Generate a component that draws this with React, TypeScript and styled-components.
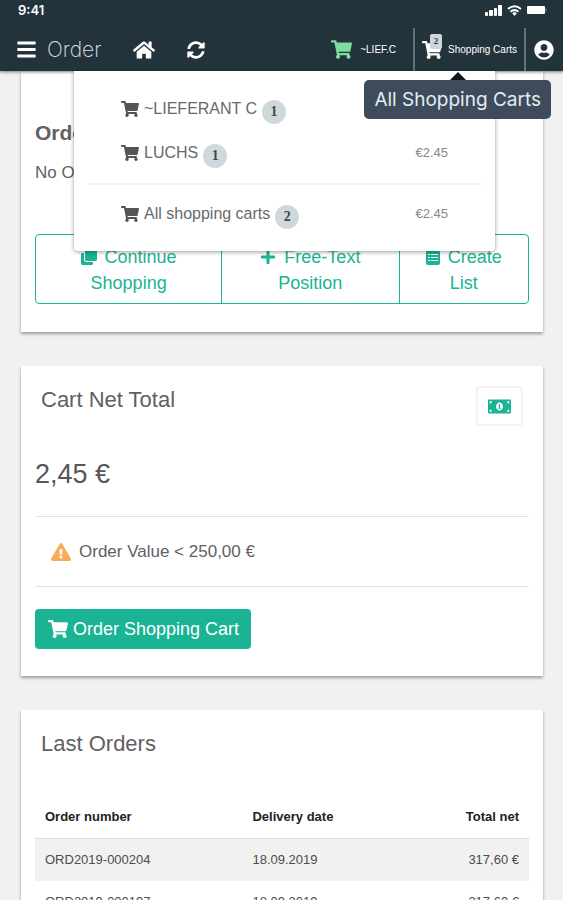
import React from 'react';
import styled, { createGlobalStyle } from 'styled-components';
import {
  FaBars, FaClone, FaExclamationTriangle, FaHome, FaMoneyBillAlt, FaPlus,
  FaShoppingCart, FaSyncAlt, FaUserCircle,
} from 'react-icons/fa';

const green = '#1ab394';
const dark = '#23333b';

const GlobalStyle = createGlobalStyle`
  *, *::before, *::after { box-sizing: border-box; }
  html { scrollbar-width: none; }
  body {
    margin: 0;
    background: #f1f1f1;
    color: #5f6163;
    font: 17px/26px "Liberation Sans", Arial, sans-serif;
  }
  button { font: inherit; color: inherit; background: none; border: 0; padding: 0; cursor: pointer; }
  h1, h2, h3, p, ul { margin: 0; padding: 0; font-weight: 400; }
  svg { flex: none; }
`;

const Header = styled.header`
  position: sticky;
  top: 0;
  z-index: 10;
  background: ${dark};
  color: #fff;
  box-shadow: 0 1px 3px rgba(0, 0, 0, 0.5);
`;

const StatusBar = styled.div`
  display: flex;
  align-items: center;
  justify-content: space-between;
  height: 28px;
  padding: 0 16px 8px 18px;
  font: 600 13px/20px Inter, sans-serif;
`;

const StatusIcons = styled.div`
  display: flex;
  align-items: center;
  gap: 4px;
`;

const Nav = styled.nav`
  display: flex;
  align-items: stretch;
  height: 43px;
  padding-left: 16px;
`;

const NavButton = styled.button<{ $gap?: number }>`
  display: flex;
  align-items: center;
  margin-right: ${({ $gap = 0 }) => $gap}px;
`;

const Title = styled.h1`
  margin-right: 32px;
  color: #dde2e4;
  font: 200 21px/43px Inter, sans-serif;
`;

const NavEnd = styled.div`
  display: flex;
  margin-left: auto;
  font-size: 10px;
  line-height: 12px;
`;

const CartTab = styled.button`
  display: flex;
  align-items: center;
  gap: 8px;
  padding-right: 17px;
`;

const AllCartsTab = styled(CartTab)`
  position: relative;
  gap: 6px;
  padding: 0 7px;
  border: solid #64727a;
  border-width: 0 2px;
`;

const CartIcon = styled.span`
  position: relative;
  display: flex;
`;

const CartCount = styled.span`
  position: absolute;
  top: -6px;
  right: 0;
  width: 12px;
  height: 15px;
  border-radius: 2px;
  background: #ccd6db;
  color: ${dark};
  font: 700 9px/15px "Liberation Serif", serif;
  text-align: center;
`;

const AccountButton = styled.button`
  display: flex;
  align-items: center;
  padding: 0 9px 0 8px;
`;

const Tooltip = styled.div`
  position: absolute;
  top: 80px;
  right: 12px;
  padding: 0 10px;
  border-radius: 5px;
  background: #3e4b5a;
  color: #e3edf5;
  font: 19px/39px Inter, sans-serif;

  &::before {
    content: '';
    position: absolute;
    top: -8px;
    left: 50%;
    margin-left: -8px;
    border: solid transparent;
    border-width: 0 8px 8px;
    border-bottom-color: #10171b;
  }
`;

const CartMenu = styled.ul`
  position: absolute;
  top: 71px;
  right: 68px;
  left: 74px;
  padding: 16px 14px 15px;
  border-radius: 0 0 4px 4px;
  background: #fff;
  box-shadow: 0 1px 4px rgba(0, 0, 0, 0.4);
  color: #67696b;
  font-size: 16px;
  list-style: none;
`;

const MenuItem = styled.li<{ $divided?: boolean }>`
  margin-top: ${({ $divided }) => ($divided ? 8 : 0)}px;
  padding-top: ${({ $divided }) => ($divided ? 7 : 0)}px;
  border-top: ${({ $divided }) => ($divided ? '2px solid #f5f5f5' : '0')};
`;

const MenuButton = styled.button`
  display: flex;
  align-items: center;
  width: 100%;
  height: 44px;
  padding: 0 33px;
  text-align: left;
`;

const MenuName = styled.span`
  margin: 0 5px;
`;

const Badge = styled.span`
  width: 24px;
  height: 24px;
  margin-top: 5px;
  border-radius: 50%;
  background: #cfd9db;
  color: #3e494d;
  font: 700 14px/24px "Liberation Serif", serif;
  text-align: center;
`;

const MenuPrice = styled.span`
  margin-left: auto;
  color: #85878a;
  font-size: 13px;
`;

const Main = styled.main`
  display: grid;
  gap: 34px;
  padding: 0 20px 34px 21px;
`;

const Card = styled.section`
  padding: 0 14px;
  background: #fff;
  box-shadow: 0 2px 3px rgba(0, 0, 0, 0.35);
`;

const OrderCard = styled(Card)`
  padding-top: 49px;
  padding-bottom: 28px;
`;

const OrderHeading = styled.h2`
  font-size: 21px;
  font-weight: 700;
`;

const OrderText = styled.p`
  margin: 14px 0 48px;
`;

const ButtonGroup = styled.div`
  display: grid;
  grid-template-columns: 186fr 178fr 130fr;
  border: 1px solid ${green};
  border-radius: 4px;
  color: ${green};
`;

const GroupButton = styled.button<{ $pad: number }>`
  height: 68px;
  padding: 1px ${({ $pad }) => $pad}px 0;
  font-size: 18px;

  & + & { border-left: 1px solid ${green}; }

  svg { margin-right: 8px; vertical-align: -2px; }
`;

const CardHead = styled.div`
  display: flex;
  align-items: flex-start;
  justify-content: space-between;
  padding: 20px 6px 0;
`;

const CardTitle = styled.h2`
  font-size: 22px;
  line-height: 28px;
`;

const IconButton = styled.button`
  display: grid;
  place-items: center;
  width: 47px;
  height: 40px;
  border: 2px solid #f3f3f3;
  border-radius: 4px;
  color: ${green};
`;

const Amount = styled.p`
  padding: 32px 0 26px;
  color: #55575a;
  font-size: 27px;
  line-height: 32px;
`;

const Warning = styled.p`
  display: flex;
  align-items: center;
  gap: 8px;
  height: 71px;
  padding-left: 16px;
  border: solid #e2e2e2;
  border-width: 1px 0;

  svg { color: #f8ac59; }
`;

const OrderButton = styled.button`
  display: flex;
  align-items: center;
  gap: 5px;
  height: 40px;
  margin: 22px 0 27px;
  padding: 0 12px 0 13px;
  border-radius: 4px;
  background: ${green};
  color: #fff;
  font-size: 18px;
`;

const Table = styled.table`
  width: 100%;
  margin-top: 37px;
  border-collapse: collapse;
  color: #4c4c4c;
  font-size: 13px;
  line-height: 18px;

  th, td { padding: 12px 10px 11px; text-align: left; }
  th { padding: 13px 10px 12px; color: #222; }
  th:first-child { width: 42%; }
  th:last-child, td:last-child { text-align: right; }
  tbody tr { border-top: 1px solid #ddd; }
  tbody tr:nth-child(odd) { background: #f1f1f1; }
  tbody tr:nth-child(even) { border-top-color: #f1f1f1; }
`;

const carts = [
  { name: '~LIEFERANT C', count: 1, price: '', divided: false },
  { name: 'LUCHS', count: 1, price: '€2.45', divided: false },
  { name: 'All shopping carts', count: 2, price: '€2.45', divided: true },
];

const orders = [
  { id: 'ORD2019-000204', date: '18.09.2019', total: '317,60 €' },
  { id: 'ORD2019-000197', date: '18.09.2019', total: '317,60 €' },
];

function SystemIcons() {
  return (
    <StatusIcons>
      <svg width="18" height="11" viewBox="0 0 18 11" fill="#fff" aria-hidden="true">
        <rect x="0" y="7" width="3" height="4" rx="1" />
        <rect x="4" y="5" width="4" height="6" rx="1" />
        <rect x="9" y="3" width="3" height="8" rx="1" />
        <rect x="13" y="0" width="4" height="11" rx="1" />
      </svg>
      <svg width="15" height="11" viewBox="0 0 15 11" fill="none" stroke="#fff" strokeWidth="2" aria-hidden="true">
        <path d="M1 4Q7.500-1.500 14 4M3.500 6.700Q7.500 3.500 11.500 6.700" />
        <path d="M5.200 8.200Q7.500 6.500 9.800 8.200L7.500 11Z" fill="#fff" stroke="none" />
      </svg>
      <svg width="21" height="10" viewBox="0 0 21 10" aria-hidden="true">
        <rect x="1" y="1" width="18" height="8" rx="1" fill="#fff" />
        <path d="M20 3.500v3" stroke="#87939a" />
      </svg>
    </StatusIcons>
  );
}

function ListIcon() {
  return (
    <svg width="14" height="15" viewBox="0 0 14 15" aria-hidden="true">
      <rect width="14" height="15" rx="2" fill={green} />
      <path d="M2 4.500h2M5 4.500h7M2 7.500h2M5 7.500h7M2 10.500h2M5 10.500h7" stroke="#fff" />
    </svg>
  );
}

export default function App() {
  return (
    <>
      <GlobalStyle />
      <Header>
        <StatusBar>
          <span>9:41</span>
          <SystemIcons />
        </StatusBar>
        <Nav>
          <NavButton $gap={10} aria-label="Menu"><FaBars size={21} /></NavButton>
          <Title>Order</Title>
          <NavButton $gap={32} aria-label="Home"><FaHome size={22} /></NavButton>
          <NavButton aria-label="Refresh"><FaSyncAlt size={18} /></NavButton>
          <NavEnd>
            <CartTab><FaShoppingCart size={21} color="#7fdc9e" />~LIEF.C</CartTab>
            <AllCartsTab>
              <CartIcon>
                <FaShoppingCart size={20} />
                <CartCount>2</CartCount>
              </CartIcon>
              Shopping Carts
            </AllCartsTab>
            <AccountButton aria-label="Account"><FaUserCircle size={20} /></AccountButton>
          </NavEnd>
        </Nav>
        <CartMenu>
          {carts.map((cart) => (
            <MenuItem key={cart.name} $divided={cart.divided}>
              <MenuButton>
                <FaShoppingCart size={18} color="#555" />
                <MenuName>{cart.name}</MenuName>
                <Badge>{cart.count}</Badge>
                <MenuPrice>{cart.price}</MenuPrice>
              </MenuButton>
            </MenuItem>
          ))}
        </CartMenu>
        <Tooltip role="tooltip">All Shopping Carts</Tooltip>
      </Header>
      <Main>
        <OrderCard>
          <OrderHeading>Order</OrderHeading>
          <OrderText>No Order</OrderText>
          <ButtonGroup>
            <GroupButton $pad={36}><FaClone size={16} />Continue Shopping</GroupButton>
            <GroupButton $pad={32}><FaPlus size={16} />Free-Text Position</GroupButton>
            <GroupButton $pad={20}><ListIcon />Create List</GroupButton>
          </ButtonGroup>
        </OrderCard>
        <Card>
          <CardHead>
            <CardTitle>Cart Net Total</CardTitle>
            <IconButton aria-label="Payment"><FaMoneyBillAlt size={23} /></IconButton>
          </CardHead>
          <Amount>2,45 €</Amount>
          <Warning><FaExclamationTriangle size={20} />Order Value &lt; 250,00 €</Warning>
          <OrderButton><FaShoppingCart size={20} />Order Shopping Cart</OrderButton>
        </Card>
        <Card>
          <CardHead>
            <CardTitle>Last Orders</CardTitle>
          </CardHead>
          <Table>
            <thead>
              <tr><th>Order number</th><th>Delivery date</th><th>Total net</th></tr>
            </thead>
            <tbody>
              {orders.map((order) => (
                <tr key={order.id}><td>{order.id}</td><td>{order.date}</td><td>{order.total}</td></tr>
              ))}
            </tbody>
          </Table>
        </Card>
      </Main>
    </>
  );
}
